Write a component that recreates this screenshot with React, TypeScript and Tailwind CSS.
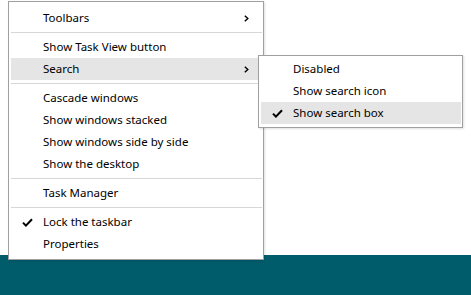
import React from "react";

type Entry =
  | { kind: "item"; label: string; checked?: boolean; submenu?: boolean; active?: boolean }
  | { kind: "sep" };

const mainMenu: Entry[] = [
  { kind: "item", label: "Toolbars", submenu: true },
  { kind: "sep" },
  { kind: "item", label: "Show Task View button" },
  { kind: "item", label: "Search", submenu: true, active: true },
  { kind: "sep" },
  { kind: "item", label: "Cascade windows" },
  { kind: "item", label: "Show windows stacked" },
  { kind: "item", label: "Show windows side by side" },
  { kind: "item", label: "Show the desktop" },
  { kind: "sep" },
  { kind: "item", label: "Task Manager" },
  { kind: "sep" },
  { kind: "item", label: "Lock the taskbar", checked: true },
  { kind: "item", label: "Properties" },
];

const searchMenu: Entry[] = [
  { kind: "item", label: "Disabled" },
  { kind: "item", label: "Show search icon" },
  { kind: "item", label: "Show search box", checked: true, active: true },
];

function Check() {
  return (
    <svg width="11" height="9" viewBox="0 0 11 9">
      <path d="M1 4.6 L3.9 7.6 L10 1.2" fill="none" stroke="#000" strokeWidth="2" />
    </svg>
  );
}

function Chevron() {
  return (
    <svg width="5" height="7" viewBox="0 0 5 7">
      <path d="M0.8 0.8 L3.8 3.5 L0.8 6.2" fill="none" stroke="#000" strokeWidth="1.4" />
    </svg>
  );
}

function MenuList({ entries }: { entries: Entry[] }) {
  return (
    <div className="flex flex-col">
      {entries.map((e, i) =>
        e.kind === "sep" ? (
          <div key={i} className="h-[7px] flex items-center">
            <div className="h-px w-full bg-[#d7d7d7]" />
          </div>
        ) : (
          <div
            key={i}
            className={`flex items-center h-[22px] text-[11.5px] text-black whitespace-nowrap ${
              e.active ? "bg-[#e5e5e5]" : ""
            }`}
          >
            <div className="w-[32px] pl-[11px] flex items-center">{e.checked && <Check />}</div>
            <span className="flex-1 leading-[22px]">{e.label}</span>
            {e.submenu && (
              <div className="mr-[13px] flex items-center">
                <Chevron />
              </div>
            )}
          </div>
        )
      )}
    </div>
  );
}

export default function App() {
  return (
    <div
      className="relative w-[471px] h-[295px] bg-white flex flex-col overflow-hidden"
      style={{ fontFamily: '"Segoe UI", "Noto Sans", "Open Sans", sans-serif' }}
    >
      <div className="flex-1" />
      <div className="h-[40px] bg-[#005b6b]" />

      {/* taskbar context menu */}
      <div className="absolute left-[8px] top-[1px] w-[256px] h-[259px] bg-white border border-[#a0a0a0] pt-[5px] pl-[2px] pr-[1px] shadow-[1px_1px_2px_rgba(0,0,0,0.12)]">
        <MenuList entries={mainMenu} />
      </div>

      {/* search submenu */}
      <div className="absolute left-[258px] top-[55px] w-[205px] h-[73px] bg-white border border-[#a0a0a0] pt-[2px] pl-[2px] pr-[1px] shadow-[1px_1px_2px_rgba(0,0,0,0.12)]">
        <MenuList entries={searchMenu} />
      </div>
    </div>
  );
}
